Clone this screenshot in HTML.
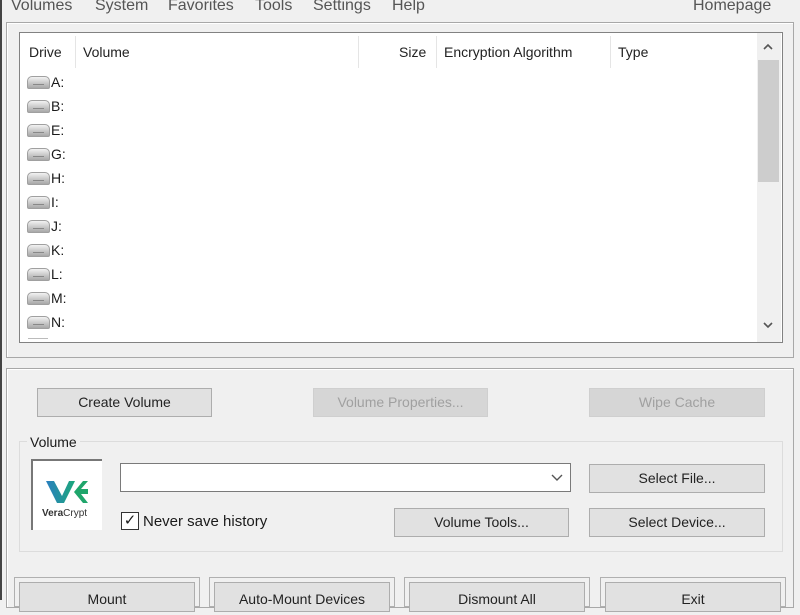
<!DOCTYPE html>
<html><head><style>
*{box-sizing:border-box;margin:0;padding:0}
body{width:800px;height:600px;overflow:hidden;background:#f0f0f0;font-family:"Liberation Sans",sans-serif;color:#1a1a1a;position:relative}
.a{position:absolute}
.menu{top:-3px;font-size:16px;color:#555}
.btn{position:absolute;background:#e1e1e1;border:1px solid #adadad;font-size:14px;text-align:center;line-height:27px;color:#222}
.dis{color:#a0a0a0;background:#d6d6d6;border-color:#cfcfcf}
.hdr{position:absolute;top:44px;font-size:14px;color:#222}
.sep{position:absolute;top:36px;width:1px;height:32px;background:#e5e5e5}
.row{position:absolute;left:27px;font-size:14px;height:20px;line-height:20px}
.drv{display:inline-block;position:relative;width:23px;height:13px;margin-right:1px;vertical-align:-2px;border:1px solid #a0a0a0;border-radius:5px 5px 2px 2px;background:linear-gradient(#f2f2f2,#c4c4c4 60%,#a8a8a8)}
.drv:after{content:"";position:absolute;left:5px;top:7px;width:11px;height:1px;background:#888}
</style></head><body>
<div class="a" style="left:0;top:0;width:2px;height:600px;background:#444"></div>
<div class="a menu" style="left:11px">Volumes</div>
<div class="a menu" style="left:95px">System</div>
<div class="a menu" style="left:168px">Favorites</div>
<div class="a menu" style="left:255px">Tools</div>
<div class="a menu" style="left:313px">Settings</div>
<div class="a menu" style="left:392px">Help</div>
<div class="a menu" style="left:693px">Homepage</div>

<div class="a" style="left:6px;top:22px;width:788px;height:336px;border:1px solid #a8a8a8;box-shadow:inset 1px 1px 0 #fff"></div>
<div class="a" style="left:19px;top:32px;width:764px;height:311px;border:1px solid #828282;background:#fff"></div>
<div class="hdr" style="left:29px">Drive</div>
<div class="sep" style="left:75px"></div>
<div class="hdr" style="left:83px">Volume</div>
<div class="sep" style="left:358px"></div>
<div class="hdr" style="left:399px">Size</div>
<div class="sep" style="left:436px"></div>
<div class="hdr" style="left:444px">Encryption Algorithm</div>
<div class="sep" style="left:610px"></div>
<div class="hdr" style="left:618px">Type</div>
<div class="a" style="left:757px;top:33px;width:24px;height:309px;background:#f0f0f0"></div>
<div class="a" style="left:758px;top:60px;width:21px;height:122px;background:#cdcdcd"></div>
<svg class="a" style="left:763px;top:43px" width="10" height="7"><path d="M1 6L5 2L9 6" stroke="#555" stroke-width="1.6" fill="none"/></svg>
<svg class="a" style="left:763px;top:322px" width="10" height="7"><path d="M1 1L5 5L9 1" stroke="#555" stroke-width="1.6" fill="none"/></svg>

<div class="row" style="top:72px"><span class="drv"></span>A:</div>
<div class="row" style="top:96px"><span class="drv"></span>B:</div>
<div class="row" style="top:120px"><span class="drv"></span>E:</div>
<div class="row" style="top:144px"><span class="drv"></span>G:</div>
<div class="row" style="top:168px"><span class="drv"></span>H:</div>
<div class="row" style="top:192px"><span class="drv"></span>I:</div>
<div class="row" style="top:216px"><span class="drv"></span>J:</div>
<div class="row" style="top:240px"><span class="drv"></span>K:</div>
<div class="row" style="top:264px"><span class="drv"></span>L:</div>
<div class="row" style="top:288px"><span class="drv"></span>M:</div>
<div class="row" style="top:312px"><span class="drv"></span>N:</div>
<div class="a" style="left:28px;top:338px;width:20px;height:4px;border-top:1px solid #bbb"></div>

<div class="a" style="left:6px;top:368px;width:788px;height:240px;border:1px solid #a8a8a8;box-shadow:inset 1px 1px 0 #fff"></div>
<div class="btn" style="left:37px;top:388px;width:175px;height:29px">Create Volume</div>
<div class="btn dis" style="left:313px;top:388px;width:175px;height:29px">Volume Properties...</div>
<div class="btn dis" style="left:589px;top:388px;width:176px;height:29px">Wipe Cache</div>

<div class="a" style="left:19px;top:441px;width:764px;height:111px;border:1px solid #dcdcdc"></div>
<div class="a" style="left:27px;top:434px;font-size:14px;background:#f0f0f0;padding:0 3px">Volume</div>
<div class="a" style="left:31px;top:459px;width:71px;height:71px;background:#fff;border-left:2px solid #777;border-top:2px solid #777"></div>
<svg class="a" style="left:45px;top:479px" width="44" height="26" viewBox="0 0 44 26">
<defs><linearGradient id="g" x1="0" x2="1"><stop offset="0" stop-color="#2a7fc0"/><stop offset="1" stop-color="#1da87a"/></linearGradient></defs>
<path d="M1 2h8l8 15 7-15h6l-11 22h-7z" fill="url(#g)"/>
<path d="M29 13l9-11h5l-7 8h7v5h-7l7 9h-5z" fill="#1fa56b"/>
</svg>
<div class="a" style="left:42px;top:508px;font-size:10px;color:#333"><b>Vera</b>Crypt</div>

<div class="a" style="left:120px;top:463px;width:451px;height:29px;background:#fff;border:1px solid #7a7a7a"></div>
<svg class="a" style="left:551px;top:474px" width="12" height="8"><path d="M1 1L6 6L11 1" stroke="#555" stroke-width="1.4" fill="none"/></svg>
<div class="btn" style="left:589px;top:464px;width:176px;height:29px">Select File...</div>
<div class="btn" style="left:394px;top:508px;width:175px;height:29px">Volume Tools...</div>
<div class="btn" style="left:589px;top:508px;width:176px;height:29px">Select Device...</div>
<div class="a" style="left:121px;top:512px;width:18px;height:18px;border:1px solid #333;background:#fff;font-size:15px;line-height:16px;text-align:center">&#10003;</div>
<div class="a" style="left:143px;top:513px;font-size:15px">Never save history</div>

<div class="a" style="left:14px;top:577px;width:186px;height:30px;border:1px solid #b0b0b0"></div>
<div class="btn" style="left:19px;top:582px;width:176px;height:30px;line-height:32px">Mount</div>
<div class="a" style="left:209px;top:577px;width:186px;height:30px;border:1px solid #b0b0b0"></div>
<div class="btn" style="left:214px;top:582px;width:176px;height:30px;line-height:32px">Auto-Mount Devices</div>
<div class="a" style="left:404px;top:577px;width:186px;height:30px;border:1px solid #b0b0b0"></div>
<div class="btn" style="left:409px;top:582px;width:176px;height:30px;line-height:32px">Dismount All</div>
<div class="a" style="left:600px;top:577px;width:186px;height:30px;border:1px solid #b0b0b0"></div>
<div class="btn" style="left:605px;top:582px;width:176px;height:30px;line-height:32px">Exit</div>
</body></html>
